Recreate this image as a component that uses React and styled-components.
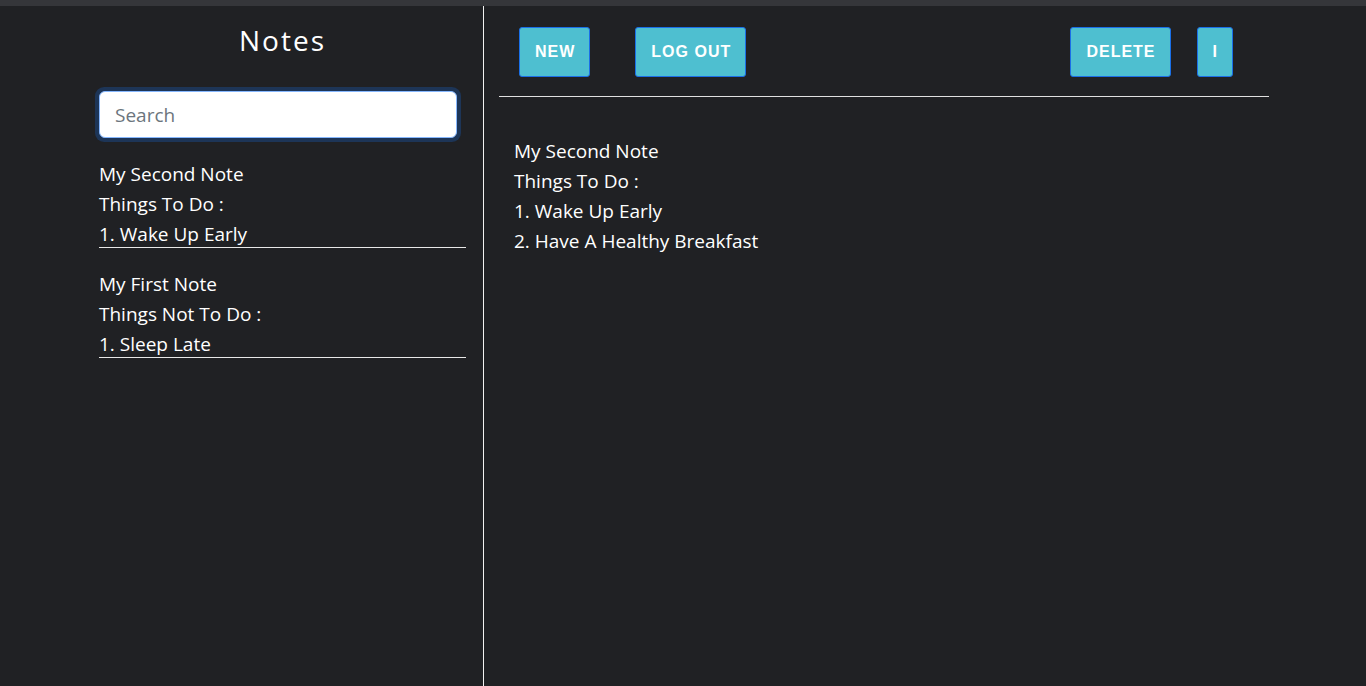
import styled, { createGlobalStyle } from 'styled-components'

const GlobalStyle = createGlobalStyle`
    html, body {
        margin: 0;
        padding: 0;
        background: #202124;
        overflow: hidden;
    }
    body {
        font-family: "Open Sans", "Noto Sans", sans-serif;
        color: #ffffff;
    }
`

const TopStrip = styled.div`
    height: 6px;
    background: #35363a;
`

const Layout = styled.div`
    display: flex;
    height: 680px;
`

const Sidebar = styled.aside`
    width: 484px;
    flex: none;
    box-sizing: border-box;
    border-right: 1px solid #f1f1f1;
    padding: 14px 17px 0 99px;
    display: flex;
    flex-direction: column;
`

const Title = styled.h1`
    margin: 0;
    font-size: 28px;
    font-weight: 400;
    letter-spacing: 2px;
    line-height: 40px;
    text-align: center;
`

const SearchRing = styled.div`
    margin-top: 27px;
    margin-left: -4px;
    width: 366px;
    padding: 4px;
    box-sizing: border-box;
    border-radius: 9px;
    background: #1d3557;
`

const SearchInput = styled.input`
    display: block;
    width: 100%;
    height: 47px;
    box-sizing: border-box;
    border: 1px solid #86b7fe;
    border-radius: 6px;
    padding: 0 15px;
    font: inherit;
    font-size: 19px;
    color: #212529;
    background: #ffffff;
    outline: none;
    &::placeholder {
        color: #6c757d;
    }
`

const NoteList = styled.div`
    margin-top: 17px;
    display: flex;
    flex-direction: column;
    gap: 21px;
`

const NoteItem = styled.div`
    border-bottom: 1px solid #e8e8e8;
    & > div:last-child {
        margin-bottom: -2px;
    }
`

const Line = styled.div`
    font-size: 19px;
    line-height: 30px;
    white-space: nowrap;
`

const Main = styled.main`
    flex: 1;
    padding: 21px 97px 0 15px;
`

const Toolbar = styled.div`
    display: flex;
    justify-content: space-between;
    padding: 0 36px 0 20px;
`

const ButtonGroup = styled.div`
    display: flex;
    gap: ${ p => p.$gap }px;
`

const ActionButton = styled.button`
    height: 50px;
    padding: 0 14px 1px 15px;
    border: 1px solid #1a6fe8;
    border-radius: 3px;
    background: #4ebfd0;
    color: #ffffff;
    font-family: "Liberation Sans", Arial, sans-serif;
    font-size: 16px;
    font-weight: 700;
    letter-spacing: 1px;
`

const Rule = styled.hr`
    margin: 19px 0 0;
    border: none;
    border-top: 1px solid #e0e0e0;
`

const NoteBody = styled.div`
    padding: 39px 0 0 15px;
`

const notes = [
    { id: 2, lines: [ `My Second Note`, `Things To Do :`, `1. Wake Up Early` ] },
    { id: 1, lines: [ `My First Note`, `Things Not To Do :`, `1. Sleep Late` ] },
]

const current = [ `My Second Note`, `Things To Do :`, `1. Wake Up Early`, `2. Have A Healthy Breakfast` ]

export default function App() {

    return <>
        <GlobalStyle />
        <TopStrip />
        <Layout>
            <Sidebar>
                <Title>Notes</Title>
                <SearchRing>
                    <SearchInput placeholder="Search" />
                </SearchRing>
                <NoteList>
                    { notes.map( note => <NoteItem key={ note.id }>
                        { note.lines.map( line => <Line key={ line }>{ line }</Line> ) }
                    </NoteItem> ) }
                </NoteList>
            </Sidebar>
            <Main>
                <Toolbar>
                    <ButtonGroup $gap={ 45 }>
                        <ActionButton>NEW</ActionButton>
                        <ActionButton>LOG OUT</ActionButton>
                    </ButtonGroup>
                    <ButtonGroup $gap={ 26 }>
                        <ActionButton>DELETE</ActionButton>
                        <ActionButton>I</ActionButton>
                    </ButtonGroup>
                </Toolbar>
                <Rule />
                <NoteBody>
                    { current.map( line => <Line key={ line }>{ line }</Line> ) }
                </NoteBody>
            </Main>
        </Layout>
    </>

}
